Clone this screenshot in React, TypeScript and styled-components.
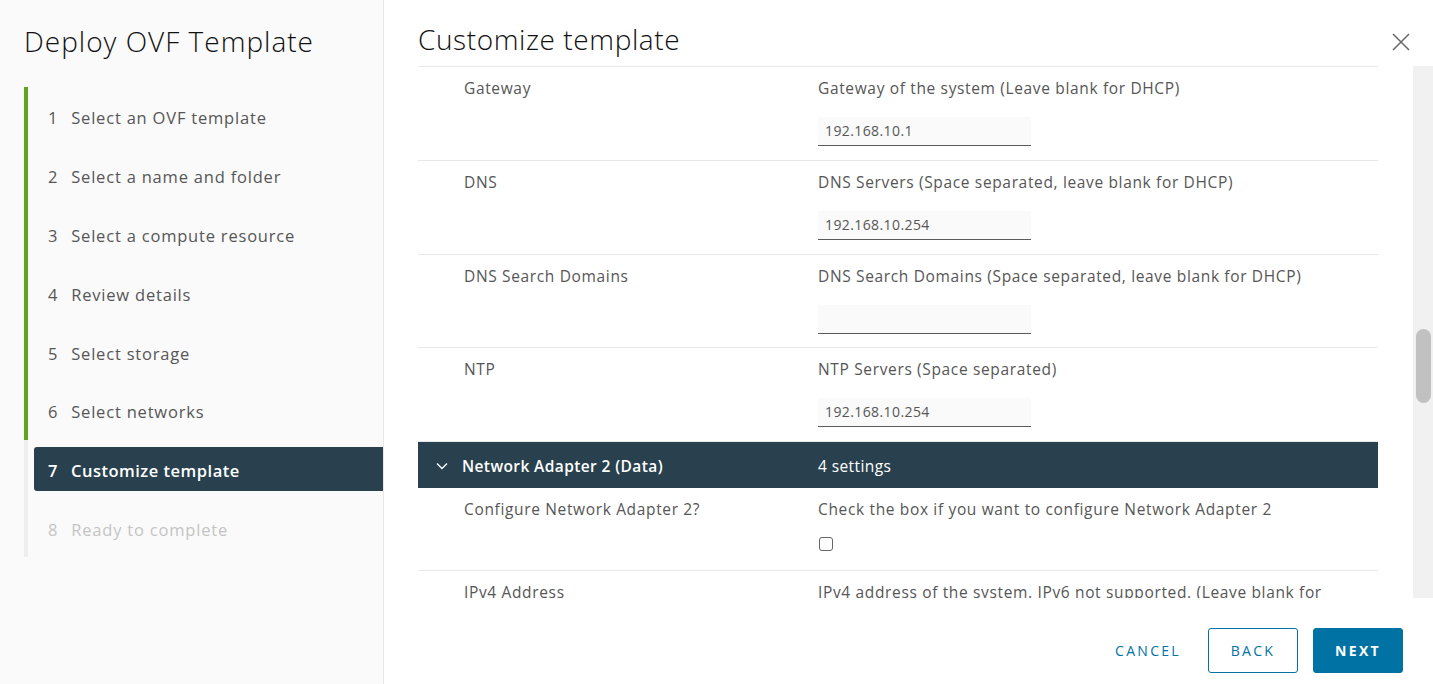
import React from "react";
import styled, { createGlobalStyle } from "styled-components";

const Global = createGlobalStyle`
  html, body { margin: 0; padding: 0; }
  body { font-family: "Open Sans", "Noto Sans", sans-serif; background: #fff; }
  * { box-sizing: border-box; }
`;

const Shell = styled.div`
  display: flex;
  width: 1433px;
  height: 684px;
  overflow: hidden;
`;

const Sidebar = styled.aside`
  width: 384px;
  flex: none;
  background: #fafafa;
  border-right: 1px solid #e6e6e6;
  padding: 22px 0 0 24px;
`;

const WizardTitle = styled.h1`
  margin: 0;
  font-weight: 300;
  font-size: 28px;
  line-height: 38px;
  color: #111;
  letter-spacing: 1px;
`;

const StepList = styled.ol`
  list-style: none;
  margin: 27px 0 0 0;
  padding: 0;
`;

const Step = styled.li<{ $rail: "green" | "gray" }>`
  height: 58.8px;
  display: flex;
  align-items: center;
  border-left: 4px solid ${(p) => (p.$rail === "green" ? "#62a420" : "#eeeeee")};
  padding-left: 6px;
`;

const StepInner = styled.div<{ $state: "done" | "active" | "todo" }>`
  flex: 1;
  height: 44px;
  display: flex;
  align-items: center;
  gap: 13px;
  padding: 3px 0 0 14px;
  border-radius: 3px 0 0 3px;
  font-size: 16.5px;
  letter-spacing: ${(p) => (p.$state === "active" ? "0.5px" : "0.8px")};
  background: ${(p) => (p.$state === "active" ? "#29414e" : "transparent")};
  color: ${(p) => (p.$state === "active" ? "#fff" : p.$state === "todo" ? "#c4c4c4" : "#565656")};
  font-weight: ${(p) => (p.$state === "active" ? 600 : 400)};
`;

const Main = styled.main`
  flex: 1;
  display: flex;
  flex-direction: column;
  background: #fff;
  min-width: 0;
`;

const Header = styled.header`
  height: 66px;
  display: flex;
  align-items: flex-start;
  justify-content: space-between;
  padding: 20px 22px 0 34px;
`;

const PageTitle = styled.h2`
  margin: 0;
  font-weight: 300;
  font-size: 28px;
  line-height: 38px;
  color: #111;
  letter-spacing: 0.6px;
`;

const CloseButton = styled.button`
  border: 0;
  background: none;
  padding: 0;
  margin-top: 12px;
  width: 20px;
  height: 20px;
  color: #666;
  cursor: pointer;
`;

const Body = styled.div`
  height: 532px;
  display: flex;
  padding-left: 34px;
`;

const Scroller = styled.div`
  flex: 1;
  overflow: hidden;
  border-top: 1px solid #e8e8e8;
  margin-right: 35px;
`;

const Track = styled.div`
  width: 20px;
  flex: none;
  background: #f1f1f1;
  padding: 263px 2px 0 3px;
`;

const Thumb = styled.div`
  height: 74px;
  border-radius: 8px;
  background: #c1c1c1;
`;

const Row = styled.div<{ $h: number }>`
  height: ${(p) => p.$h}px;
  display: grid;
  grid-template-columns: 354px 1fr;
  padding: 10px 0 0 46px;
  border-bottom: 1px solid #e8e8e8;
  color: #565656;
  font-size: 15.5px;
  letter-spacing: 0.65px;
`;

const Label = styled.div`
  line-height: 22px;
`;

const Desc = styled.div`
  display: flex;
  flex-direction: column;
  align-items: flex-start;
  gap: 18px;
  line-height: 22px;
  max-width: 525px;
`;

const TextInput = styled.div`
  width: 213px;
  height: 29px;
  background: #fafafa;
  border-bottom: 1px solid #5c5c5c;
  font-size: 14px;
  letter-spacing: 0.4px;
  line-height: 22px;
  padding: 3px 0 0 7px;
  color: #565656;
`;

const Check = styled.div`
  width: 14px;
  height: 14px;
  border: 1px solid #666;
  border-radius: 3px;
  margin: -1px 0 0 1px;
`;

const GroupHeader = styled.div`
  height: 46px;
  display: grid;
  grid-template-columns: 26px 356px 1fr;
  align-items: center;
  background: #29414e;
  color: #fff;
  font-size: 15.5px;
  letter-spacing: 0.4px;
  padding: 1px 0 0 18px;
`;

const GroupTitle = styled.span`
  font-weight: 600;
`;

const Footer = styled.footer`
  flex: 1;
  display: flex;
  justify-content: flex-end;
  align-items: flex-start;
  gap: 15px;
  padding: 30px 30px 0 0;
`;

const Btn = styled.button<{ $kind: "flat" | "outline" | "solid" }>`
  height: 45px;
  min-width: 90px;
  padding: 0 ${(p) => (p.$kind === "flat" ? "4px" : "12px")};
  border-radius: 3px;
  font-family: "Open Sans", sans-serif;
  font-size: 14px;
  font-weight: ${(p) => (p.$kind === "solid" ? 700 : 500)};
  letter-spacing: 2.3px;
  cursor: pointer;
  border: 1px solid ${(p) => (p.$kind === "flat" ? "transparent" : "#0072a3")};
  background: ${(p) => (p.$kind === "solid" ? "#0072a3" : "#fff")};
  color: ${(p) => (p.$kind === "solid" ? "#fff" : "#0072a3")};
`;

const steps = [
  "Select an OVF template",
  "Select a name and folder",
  "Select a compute resource",
  "Review details",
  "Select storage",
  "Select networks",
  "Customize template",
  "Ready to complete",
];

const rows = [
  { label: "Gateway", desc: "Gateway of the system (Leave blank for DHCP)", value: "192.168.10.1", h: 94 },
  { label: "DNS", desc: "DNS Servers (Space separated, leave blank for DHCP)", value: "192.168.10.254", h: 94 },
  { label: "DNS Search Domains", desc: "DNS Search Domains (Space separated, leave blank for DHCP)", value: "", h: 93 },
  { label: "NTP", desc: "NTP Servers (Space separated)", value: "192.168.10.254", h: 94 },
];

export default function App() {
  return (
    <>
      <Global />
      <Shell>
        <Sidebar>
          <WizardTitle>Deploy OVF Template</WizardTitle>
          <StepList>
            {steps.map((s, i) => {
              const state = i < 6 ? "done" : i === 6 ? "active" : "todo";
              return (
                <Step key={s} $rail={i < 6 ? "green" : "gray"}>
                  <StepInner $state={state}>
                    <span>{i + 1}</span>
                    <span>{s}</span>
                  </StepInner>
                </Step>
              );
            })}
          </StepList>
        </Sidebar>
        <Main>
          <Header>
            <PageTitle>Customize template</PageTitle>
            <CloseButton aria-label="Close">
              <svg width="20" height="20" viewBox="0 0 20 20" fill="none" stroke="currentColor" strokeWidth="1.5">
                <path d="M2 2 L18 18 M18 2 L2 18" />
              </svg>
            </CloseButton>
          </Header>
          <Body>
            <Scroller>
              {rows.map((r) => (
                <Row key={r.label} $h={r.h}>
                  <Label>{r.label}</Label>
                  <Desc>
                    <span>{r.desc}</span>
                    <TextInput>{r.value}</TextInput>
                  </Desc>
                </Row>
              ))}
              <GroupHeader>
                <svg width="12" height="8" viewBox="0 0 12 8" fill="none" stroke="#fff" strokeWidth="1.3">
                  <path d="M1 1.5 L6 6.5 L11 1.5" />
                </svg>
                <GroupTitle>Network Adapter 2 (Data)</GroupTitle>
                <span>4 settings</span>
              </GroupHeader>
              <Row $h={83}>
                <Label>Configure Network Adapter 2?</Label>
                <Desc>
                  <span>Check the box if you want to configure Network Adapter 2</span>
                  <Check />
                </Desc>
              </Row>
              <Row $h={94}>
                <Label>IPv4 Address</Label>
                <Desc>
                  <span>IPv4 address of the system. IPv6 not supported. (Leave blank for DHCP)</span>
                </Desc>
              </Row>
            </Scroller>
            <Track>
              <Thumb />
            </Track>
          </Body>
          <Footer>
            <Btn $kind="flat">CANCEL</Btn>
            <Btn $kind="outline">BACK</Btn>
            <Btn $kind="solid">NEXT</Btn>
          </Footer>
        </Main>
      </Shell>
    </>
  );
}
